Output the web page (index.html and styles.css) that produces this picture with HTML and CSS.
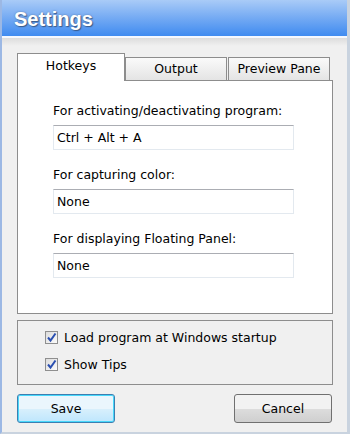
FILE: index.html
```html
<!DOCTYPE html>
<html lang="en">
  <head>
    <meta charset="UTF-8" />
    <title>Settings</title>
    <link rel="stylesheet" href="styles.css">
  </head>
  <body>
    <div class="window">
      <div class="titlebar">
        <h1>Settings</h1>
      </div>
      <div class="content">
        <div class="tabs">
          <div class="tab active">Hotkeys</div>
          <div class="tab">Output</div>
          <div class="tab">Preview Pane</div>
        </div>
        <div class="panel">
          <div class="field">
            <label>For activating/deactivating program:</label>
            <div class="input">Ctrl + Alt + A</div>
          </div>
          <div class="field">
            <label>For capturing color:</label>
            <div class="input">None</div>
          </div>
          <div class="field">
            <label>For displaying Floating Panel:</label>
            <div class="input">None</div>
          </div>
        </div>
        <div class="options">
          <div class="check"><span class="box"><svg width="11" height="11" viewBox="0 0 11 11"><path d="M2 5.5 L4.5 8.5 L9.5 1.5" fill="none" stroke="#2a4fb0" stroke-width="2"/></svg></span>Load program at Windows startup</div>
          <div class="check"><span class="box"><svg width="11" height="11" viewBox="0 0 11 11"><path d="M2 5.5 L4.5 8.5 L9.5 1.5" fill="none" stroke="#2a4fb0" stroke-width="2"/></svg></span>Show Tips</div>
        </div>
        <div class="buttons">
          <button class="btn default">Save</button>
          <button class="btn">Cancel</button>
        </div>
      </div>
    </div>
  </body>
</html>
```

FILE: styles.css
```css
body {
  margin: 0;
  padding: 0;
  font-family: "DejaVu Sans", sans-serif;
  font-size: 12.5px;
  color: #000;
  background: #f0f0f0;
}
.window {
  width: 350px;
  height: 434px;
  box-sizing: border-box;
  background: #f0f0f0;
  border-left: 2px solid #9cb8e4;
  border-right: 3px solid #c9d3df;
  border-bottom: 2px solid #c9d3df;
  overflow: hidden;
}
.titlebar {
  height: 38px;
  margin-left: -2px;
  margin-right: -3px;
  background: linear-gradient(#a9cbf7, #74aaf3 50%, #3f8bf0);
  border-bottom: 2px solid #f4f8ff;
  box-sizing: border-box;
  padding: 7px 0 0 14px;
}
.titlebar h1 {
  margin: 0;
  font-family: "Liberation Sans", sans-serif;
  font-weight: bold;
  font-size: 20px;
  line-height: 24px;
  color: #fff;
  text-shadow: 1px 1px 1px #3a5a8a, 0 0 2px #5a7aa8;
}
.content {
  background: linear-gradient(#dcdcdc, #f0f0f0 8px);
  padding: 15px 14px 0 15px;
  height: 394px;
  box-sizing: border-box;
}
.tabs {
  display: flex;
  height: 27px;
  align-items: flex-end;
  position: relative;
  z-index: 1;
}
.tab {
  height: 23px;
  box-sizing: border-box;
  border: 1px solid #8d8d8d;
  border-bottom: none;
  background: linear-gradient(#fafafa, #e4e4e4);
  text-align: center;
  line-height: 22px;
  width: 102px;
  margin-right: 1px;
}
.tab.active {
  height: 28px;
  width: 108px;
  background: #fff;
  margin-bottom: -1px;
  margin-right: 0;
  line-height: 24px;
  border-right: 1px solid #8d8d8d;
}
.panel {
  background: #fff;
  border: 1px solid #8d8d8d;
  height: 234px;
  box-sizing: border-box;
  padding: 21px 0 0 35px;
}
.field label {
  display: block;
  height: 23px;
  line-height: 18px;
}
.input {
  width: 241px;
  height: 25px;
  box-sizing: border-box;
  border: 1px solid #e3e9ef;
  border-top-color: #abadb3;
  padding-left: 3px;
  line-height: 23px;
  margin-bottom: 16px;
}
.options {
  margin-top: 6px;
  border: 1px solid #8d8d8d;
  height: 65px;
  box-sizing: border-box;
  padding: 9px 0 0 27px;
}
.check {
  display: flex;
  align-items: center;
  height: 14px;
  margin-bottom: 13px;
}
.box {
  width: 13px;
  height: 13px;
  box-sizing: border-box;
  border: 1px solid #8f8f8f;
  background: linear-gradient(135deg, #dcdcdc, #fbfbfb);
  margin-right: 6px;
  display: flex;
  align-items: center;
  justify-content: center;
}
.buttons {
  display: flex;
  justify-content: space-between;
  margin-top: 9px;
  padding-right: 1px;
}
.btn {
  width: 98px;
  height: 29px;
  font-family: "DejaVu Sans", sans-serif;
  font-size: 12.5px;
  border: 1px solid #707070;
  border-radius: 3px;
  background: linear-gradient(#f2f2f2 50%, #dddddd 50%, #cfcfcf);
  color: #000;
  padding: 0;
}
.btn.default {
  border-color: #3c7fb1;
  box-shadow: inset 0 0 0 1px #48d8fb;
  background: linear-gradient(#eaf6fd 50%, #d9f0fc 50%, #bee6fd);
}
```
